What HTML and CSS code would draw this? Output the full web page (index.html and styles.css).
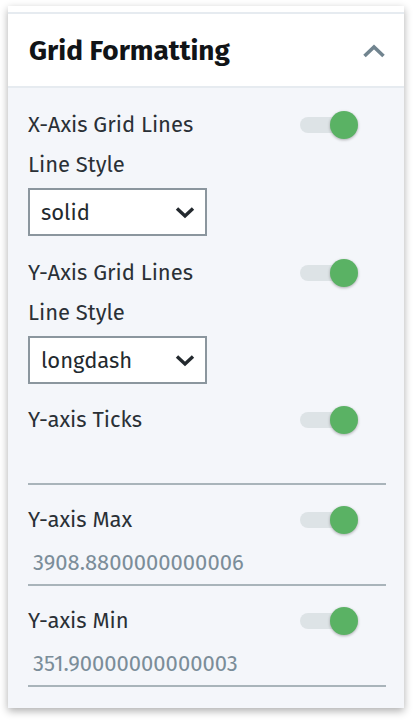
FILE: index.html
```html
<!DOCTYPE html>
<html>
<head>
<meta charset="utf-8">
<link rel="stylesheet" href="styles.css">
</head>
<body>
<div class="card">
  <div class="topstrip"></div>
  <div class="header">
    <h2 class="title">Grid Formatting</h2>
    <svg class="chev-up" width="24" height="14" viewBox="0 0 24 14"><path d="M2.5 12 L12 3 L21.5 12" fill="none" stroke="#71848f" stroke-width="3.6" stroke-linecap="butt"/></svg>
  </div>
  <div class="body">
    <div class="row r1">
      <span class="label">X-Axis Grid Lines</span>
      <span class="toggle"><span class="track"></span><span class="knob"></span></span>
    </div>
    <div class="label sub">Line Style</div>
    <div class="select">
      <span>solid</span>
      <svg width="20" height="13" viewBox="0 0 20 13"><path d="M2 2.5 L10 10 L18 2.5" fill="none" stroke="#23292e" stroke-width="3.4"/></svg>
    </div>
    <div class="row r2">
      <span class="label">Y-Axis Grid Lines</span>
      <span class="toggle"><span class="track"></span><span class="knob"></span></span>
    </div>
    <div class="label sub">Line Style</div>
    <div class="select">
      <span>longdash</span>
      <svg width="20" height="13" viewBox="0 0 20 13"><path d="M2 2.5 L10 10 L18 2.5" fill="none" stroke="#23292e" stroke-width="3.4"/></svg>
    </div>
    <div class="row r3">
      <span class="label">Y-axis Ticks</span>
      <span class="toggle"><span class="track"></span><span class="knob"></span></span>
    </div>
    <div class="divider"></div>
    <div class="row r4">
      <span class="label">Y-axis Max</span>
      <span class="toggle"><span class="track"></span><span class="knob"></span></span>
    </div>
    <div class="value">3908.8800000000006</div>
    <div class="row r5">
      <span class="label">Y-axis Min</span>
      <span class="toggle"><span class="track"></span><span class="knob"></span></span>
    </div>
    <div class="value">351.90000000000003</div>
  </div>
</div>
</body>
</html>
```

FILE: styles.css
```css
html, body {
  margin: 0;
  padding: 0;
  background: #ffffff;
}
body {
  font-family: "Fira Sans", "Open Sans", "Noto Sans", sans-serif;
  color: #2a3036;
  padding: 6px 12px 14px 8px;
}
.card {
  width: 396px;
  background: #ffffff;
  box-shadow: 0 3px 8px rgba(0,0,0,0.32);
}
.topstrip {
  height: 6px;
  border-bottom: 2px solid #e6ebf0;
}
.header {
  height: 74px;
  display: flex;
  align-items: center;
  justify-content: space-between;
  padding: 0 18px 0 21px;
  border-bottom: 2px solid #e6ebf0;
  box-sizing: border-box;
}
.title {
  margin: 0;
  font-size: 28px;
  font-weight: 700;
  color: #111417;
}
.chev-up {
  display: block;
  margin-top: 2px;
}
.body {
  background: #f4f6fa;
  padding: 17px 18px 21px 20px;
}
.row {
  height: 40px;
  display: flex;
  align-items: center;
  justify-content: space-between;
}
.label {
  font-size: 22px;
  color: #2a3036;
  line-height: 40px;
}
.sub {
  height: 40px;
}
.toggle {
  position: relative;
  width: 58px;
  height: 28px;
  margin-right: 28px;
}
.track {
  position: absolute;
  left: 0;
  top: 6px;
  width: 46px;
  height: 16px;
  border-radius: 8px;
  background: #dde3e6;
}
.knob {
  position: absolute;
  right: 0;
  top: 0;
  width: 28px;
  height: 28px;
  border-radius: 50%;
  background: #5ab264;
  box-shadow: 0 1px 3px rgba(0,0,0,0.3);
}
.select {
  margin-top: 3px;
  width: 179px;
  height: 48px;
  box-sizing: border-box;
  border: 2px solid #8b969e;
  background: #ffffff;
  display: flex;
  align-items: center;
  justify-content: space-between;
  padding: 0 10px 0 11px;
  font-size: 22px;
  color: #23292e;
}
.select svg {
  display: block;
}
.r2 { margin-top: 17px; }
.r3 { margin-top: 16px; }
.divider {
  margin-top: 43px;
  height: 2px;
  background: #a9b4ba;
  width: 358px;
}
.r4 { margin-top: 15px; }
.r5 { margin-top: 15px; }
.value {
  width: 358px;
  height: 46px;
  box-sizing: border-box;
  border-bottom: 2px solid #a9b4ba;
  font-size: 22px;
  color: #7b8d99;
  line-height: 46px;
  padding-left: 5px;
}
```
